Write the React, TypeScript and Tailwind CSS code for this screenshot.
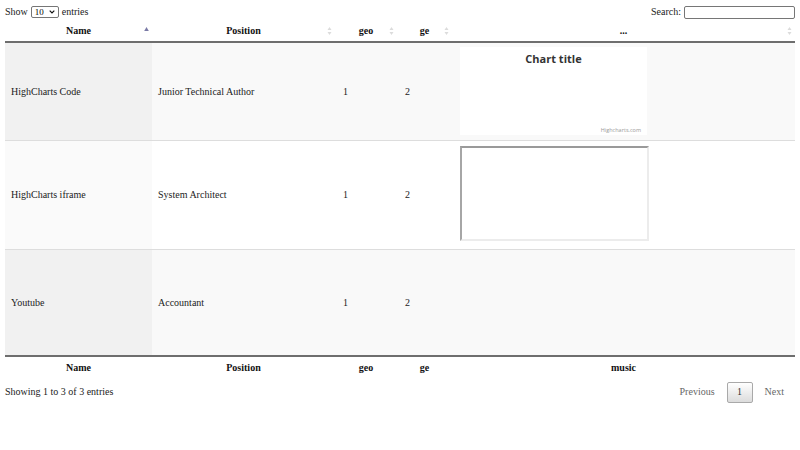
import React from "react";

const cols = "grid grid-cols-[147px_183px_62px_55px_343px]";

function SortBoth() {
  return (
    <svg width="5" height="9" viewBox="0 0 5 9" className="block">
      <path d="M2.5 0.5 L4.5 3.5 L0.5 3.5 Z" fill="#dcdcdc" />
      <path d="M2.5 8.5 L4.5 5.5 L0.5 5.5 Z" fill="#dcdcdc" />
    </svg>
  );
}

function SortAsc() {
  return (
    <svg width="5" height="9" viewBox="0 0 5 9" className="block">
      <path d="M2.5 0.5 L4.8 4.5 L0.2 4.5 Z" fill="#7a7aa6" />
    </svg>
  );
}

function HeadCell({ label, icon }: { label: string; icon: "asc" | "both" }) {
  return (
    <div className="relative flex items-center justify-center h-full font-bold text-[#111]">
      <span>{label}</span>
      <span className="absolute right-[3px] top-1/2 -translate-y-1/2">
        {icon === "asc" ? <SortAsc /> : <SortBoth />}
      </span>
    </div>
  );
}

function Row({
  name,
  pos,
  odd,
  h,
  music,
  top,
  mpt,
}: {
  name: string;
  pos: string;
  odd: boolean;
  h: string;
  music: React.ReactNode;
  top: boolean;
  mpt: string;
}) {
  const sorted = odd ? "bg-[#f1f1f1]" : "bg-[#fafafa]";
  const rest = odd ? "bg-[#f9f9f9]" : "bg-white";
  return (
    <div className={`${cols} ${h} ${top ? "border-t border-[#dddddd]" : ""}`}>
      <div className={`${sorted} flex items-center pl-[6px]`}>{name}</div>
      <div className={`${rest} flex items-center pl-[6px]`}>{pos}</div>
      <div className={`${rest} flex items-center pl-[8px]`}>1</div>
      <div className={`${rest} flex items-center pl-[8px]`}>2</div>
      <div className={`${rest} pl-[8px] ${mpt}`}>{music}</div>
    </div>
  );
}

function Chart() {
  return (
    <div className="w-[187px] h-[88px] bg-white relative font-['Open_Sans',sans-serif]">
      <div className="text-center pt-[3px] text-[11px] font-bold text-[#333] leading-[18px]">
        Chart title
      </div>
      <div className="absolute right-[6px] bottom-[1px] text-[5.5px] text-[#999] leading-[8px]">
        Highcharts.com
      </div>
    </div>
  );
}

function Frame() {
  return (
    <div className="w-[189px] h-[95px] bg-white border-2 border-t-[#9a9a9a] border-l-[#a6a6a6] border-b-[#ececec] border-r-[#ececec]" />
  );
}

export default function App() {
  return (
    <div className="w-[800px] h-[450px] bg-white px-[5px] pt-[5px] font-['Liberation_Serif',serif] text-[10px] text-[#222] leading-none">
      <div className="flex justify-between items-center h-[14px]">
        <div className="flex items-center gap-[3px]">
          <span>Show</span>
          <span className="flex items-center justify-between w-[28px] h-[12px] border border-[#767676] rounded-[2px] px-[3px] text-[9px] text-black">
            <span>10</span>
            <svg width="6" height="4" viewBox="0 0 6 4">
              <path d="M0.7 0.7 L3 3 L5.3 0.7" stroke="#111" strokeWidth="1.2" fill="none" />
            </svg>
          </span>
          <span>entries</span>
        </div>
        <div className="flex items-center gap-[3px]">
          <span>Search:</span>
          <span className="block w-[111px] h-[13px] border border-[#767676] rounded-[2px] bg-white" />
        </div>
      </div>

      <div className={`${cols} h-[23px] border-b-2 border-[#6e6e6e] mt-[1px]`}>
        <HeadCell label="Name" icon="asc" />
        <HeadCell label="Position" icon="both" />
        <HeadCell label="geo" icon="both" />
        <HeadCell label="ge" icon="both" />
        <HeadCell label="..." icon="both" />
      </div>

      <Row name="HighCharts Code" pos="Junior Technical Author" odd h="h-[97px]" top={false} mpt="pt-[4px]" music={<Chart />} />
      <Row name="HighCharts iframe" pos="System Architect" odd={false} h="h-[109px]" top mpt="pt-[5px]" music={<Frame />} />
      <Row name="Youtube" pos="Accountant" odd h="h-[106px]" top mpt="" music={null} />

      <div className={`${cols} h-[23px] border-t-2 border-[#6e6e6e]`}>
        <div className="flex items-center justify-center font-bold text-[#111]">Name</div>
        <div className="flex items-center justify-center font-bold text-[#111]">Position</div>
        <div className="flex items-center justify-center font-bold text-[#111]">geo</div>
        <div className="flex items-center justify-center font-bold text-[#111]">ge</div>
        <div className="flex items-center justify-center font-bold text-[#111]">music</div>
      </div>

      <div className="flex justify-between items-center h-[22px] mt-[3px]">
        <span>Showing 1 to 3 of 3 entries</span>
        <div className="flex items-center pr-[11px]">
          <span className="text-[#666] px-[12px]">Previous</span>
          <span className="flex items-center justify-center w-[26px] h-[21px] border border-[#a9a9a9] rounded-[2px] bg-gradient-to-b from-white to-[#dcdcdc] text-[#333]">
            1
          </span>
          <span className="text-[#666] pl-[12px]">Next</span>
        </div>
      </div>
    </div>
  );
}
